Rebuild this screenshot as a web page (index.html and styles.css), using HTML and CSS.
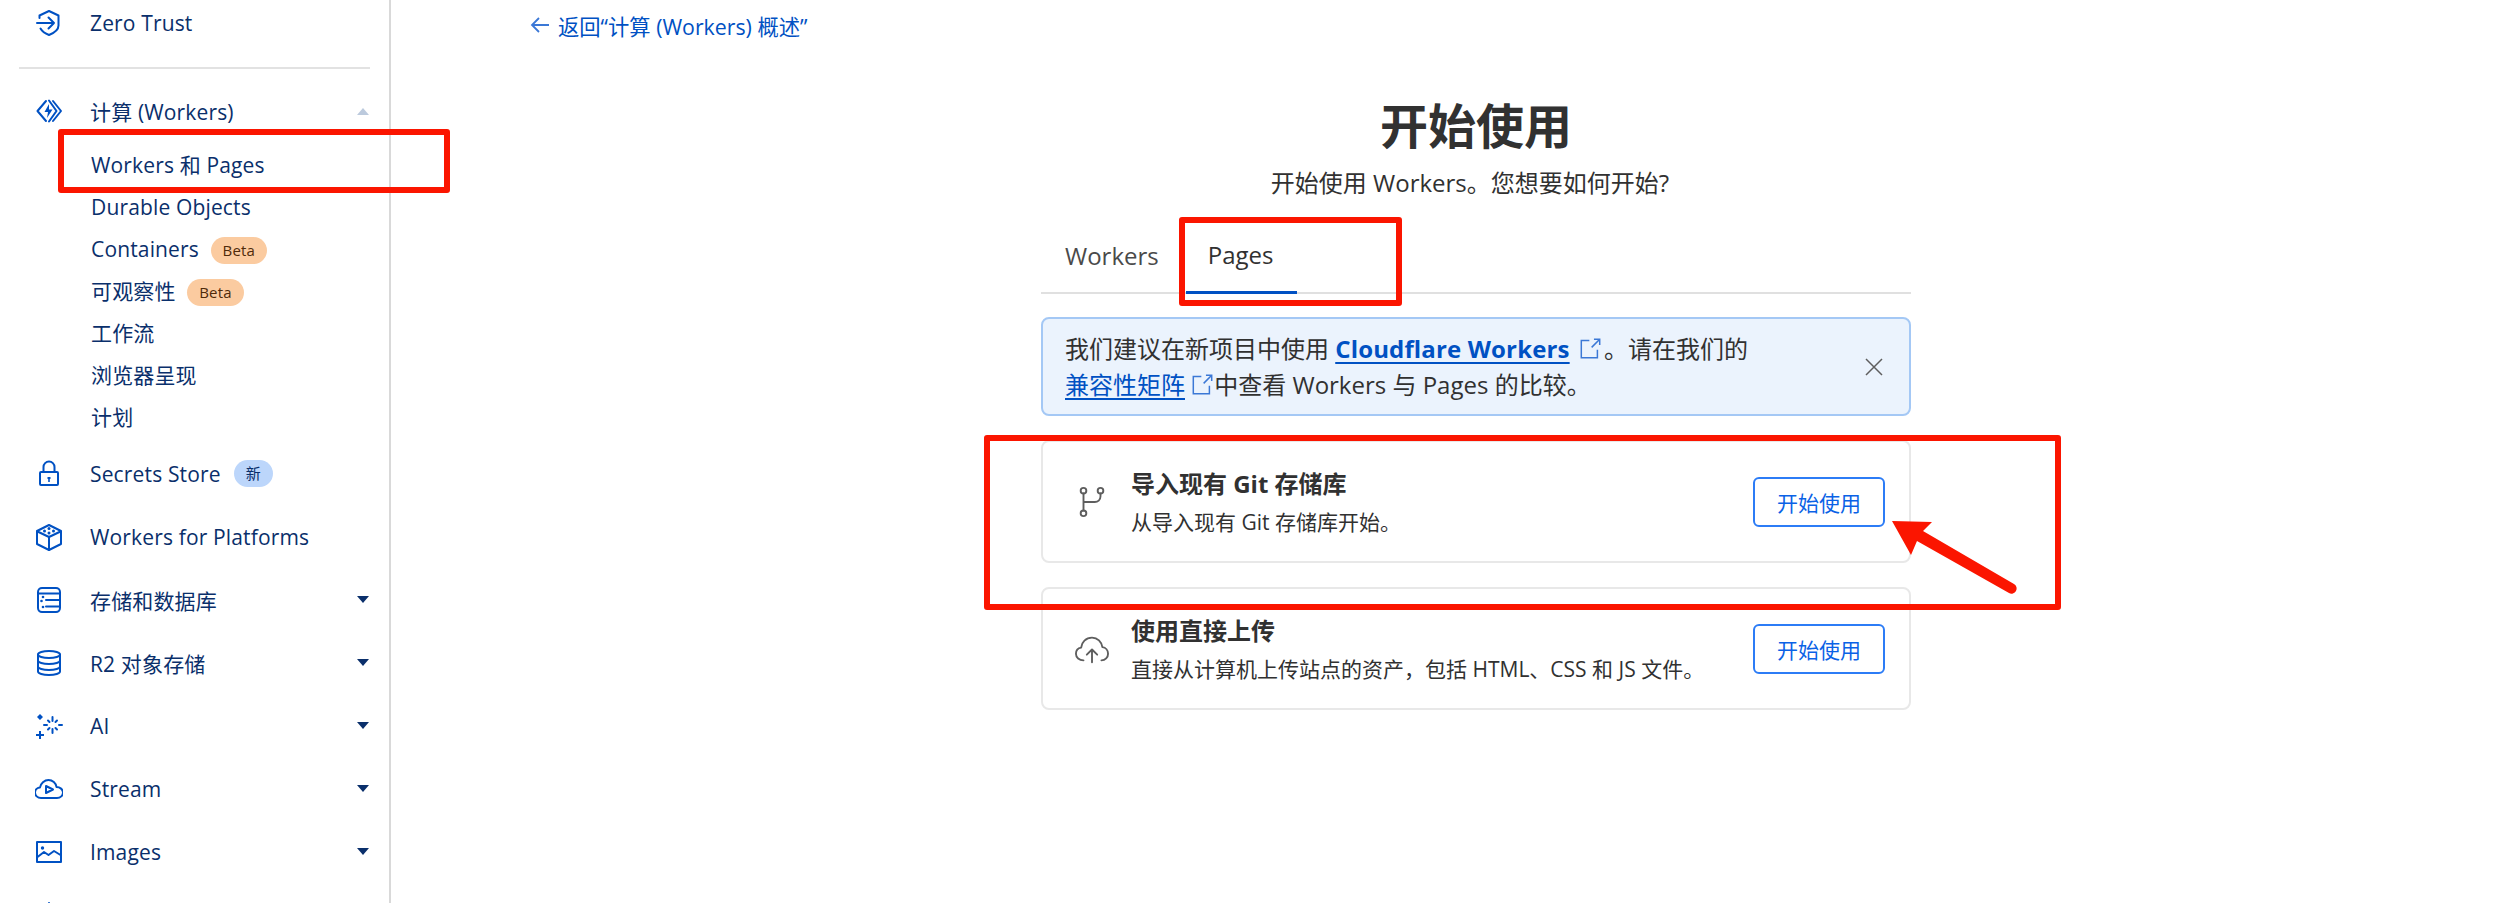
FILE: index.html
```html
<!DOCTYPE html>
<html lang="zh-CN">
<head>
<meta charset="utf-8">
<title>开始使用</title>
<link rel="stylesheet" href="styles.css">
</head>
<body>
<div class="app">
  <aside class="sidebar">
    <a class="nav-row first">
      <svg class="nav-icon" viewBox="0 0 28 28"><path d="M4.500 9V6.500L14 2l9.500 4.500v10c0 4-4.500 7.500-9.500 9.500-3.800-1.400-7-3.800-8.500-6.500"/><path d="M2 14h17M13.500 8.500 19 14l-5.500 5.500"/></svg>
      <span>Zero Trust</span>
    </a>
    <div class="divider"></div>
    <a class="nav-row compute">
      <svg class="nav-icon" viewBox="0 0 28 28"><path d="M11 4 2.500 14 11 24"/><path d="M18 4l8 10-8 10"/><path d="M14 3.500 21.500 14 14 24.500"/><path class="solid" d="M14 7 9.500 15h3.500l-1 6 5.500-8.500h-3.500z"/></svg>
      <span>计算 (Workers)</span>
      <i class="caret up"></i>
    </a>
    <ul class="sub-nav">
      <li>Workers 和 Pages</li>
      <li>Durable Objects</li>
      <li>Containers <b class="badge beta">Beta</b></li>
      <li>可观察性 <b class="badge beta">Beta</b></li>
      <li>工作流</li>
      <li>浏览器呈现</li>
      <li>计划</li>
    </ul>
    <a class="nav-row">
      <svg class="nav-icon" viewBox="0 0 28 28"><rect x="5" y="12" width="18" height="13" rx="1"/><path d="M8.500 12V7a5.500 5.500 0 0 1 11 0v5"/><path class="solid" d="M12.500 17h3v2h-.7v3h-1.600v-3h-.7z"/></svg>
      <span>Secrets Store</span><b class="badge new">新</b>
    </a>
    <a class="nav-row">
      <svg class="nav-icon" viewBox="0 0 28 28"><path d="M14 2 26 8v13l-12 6-12-6V8z"/><path d="M2.500 8.500 14 14l11.500-5.500M14 14v13"/><circle class="solid" cx="14" cy="5.500" r="1.500"/><circle class="solid" cx="9.500" cy="8" r="1.500"/><circle class="solid" cx="18.500" cy="8" r="1.500"/><circle class="solid" cx="14" cy="10" r="1.500"/></svg>
      <span>Workers for Platforms</span>
    </a>
    <a class="nav-row">
      <svg class="nav-icon" viewBox="0 0 28 28"><path d="M3 6c0-2.500 2-4 4-4h14c2 0 4 1.500 4 4v16c0 2.500-2 4-4 4H7c-2 0-4-1.500-4-4z"/><path d="M3 7.500h22M11 14h14M11 20.500h14"/><circle class="solid" cx="8" cy="11" r="1.300"/><circle class="solid" cx="6.500" cy="15" r="1.300"/><circle class="solid" cx="8" cy="21" r="1.300"/></svg>
      <span>存储和数据库</span><i class="caret"></i>
    </a>
    <a class="nav-row">
      <svg class="nav-icon" viewBox="0 0 28 28"><ellipse cx="14" cy="5.500" rx="11" ry="3.500"/><path d="M3 5.500v17c0 2 5 3.500 11 3.500s11-1.500 11-3.500v-17M3 11.500c0 2 5 3.500 11 3.500s11-1.500 11-3.500M3 17.500c0 2 5 3.500 11 3.500s11-1.500 11-3.500"/></svg>
      <span>R2 对象存储</span><i class="caret"></i>
    </a>
    <a class="nav-row">
      <svg class="nav-icon" viewBox="0 0 28 28"><path d="M17.500 5v4M17.500 17v4M24 13h3M9 13h3M22 8.500l-1.500 1.500M14.500 16 13 17.500M22 17.500 20.500 16M14.500 10 13 8.500"/><path class="solid" d="M5 2 6.500 3.500 8 5 6.500 6.500 5 8 3.500 6.500 2 5l1.500-1.500zM4 19h2v3h3v2H6v3H4v-3H1v-2h3z"/></svg>
      <span>AI</span><i class="caret"></i>
    </a>
    <a class="nav-row">
      <svg class="nav-icon" viewBox="0 0 28 28"><path d="M6 23C2.500 23 0 20.500 0 17.500c0-3 2.500-5 5-5 .5-4 4.500-7.500 8.500-7.500 4 0 7.500 3 8 7 3.500 0 6.500 2.500 6.500 5.500 0 3-2.500 5.500-6 5.500z"/><path d="M11 11l7 3.500-7 3.500z"/></svg>
      <span>Stream</span><i class="caret"></i>
    </a>
    <a class="nav-row">
      <svg class="nav-icon" viewBox="0 0 28 28"><rect x="2" y="4" width="24" height="20"/><path d="M2.500 19 9 14l4.500 3 5.500-4 6.500 4"/><circle class="solid" cx="7.500" cy="10" r="1.700"/></svg>
      <span>Images</span><i class="caret"></i>
    </a>
    <a class="nav-row">
      <svg class="nav-icon" viewBox="0 0 28 28"><path d="M14 2v24M2 14h24"/></svg>
      <span></span>
    </a>
  </aside>

  <main class="main">
    <a class="back">
      <svg viewBox="0 0 20 20"><path d="M19 10H2M9 3l-7 7 7 7"/></svg>
      <span>返回“计算 (Workers) 概述”</span>
    </a>
    <section class="panel">
      <h1>开始使用</h1>
      <p class="subtitle">开始使用 Workers。您想要如何开始?</p>
      <div class="tabs">
        <span class="tab">Workers</span>
        <span class="tab active">Pages</span>
      </div>
      <div class="banner">
        <p>我们建议在新项目中使用 <a class="strong">Cloudflare Workers</a> <svg class="ext wide" viewBox="0 0 20 20"><path d="M9 3H2v15h14v-7M11 9l7-7M13 2h5v5"/></svg>。请在我们的<br><a>兼容性矩阵</a> <svg class="ext" viewBox="0 0 20 20"><path d="M9 3H2v15h14v-7M11 9l7-7M13 2h5v5"/></svg>中查看 Workers 与 Pages 的比较。</p>
        <svg class="close" viewBox="0 0 20 20"><path d="M2 2l16 16M18 2 2 18"/></svg>
      </div>
      <div class="card">
        <svg class="card-icon" viewBox="0 0 30 36"><circle cx="6" cy="6" r="3"/><circle cx="24" cy="6" r="3"/><circle cx="6" cy="30" r="3"/><path d="M6 9v18M24 9v3c0 4-3 6-6 6H6"/></svg>
        <div class="card-text">
          <h2>导入现有 Git 存储库</h2>
          <p>从导入现有 Git 存储库开始。</p>
        </div>
        <button class="btn">开始使用</button>
      </div>
      <div class="card">
        <svg class="card-icon" viewBox="0 0 36 32"><path d="M9 28C4.500 28 1 25 1 21c0-3.500 2.500-6 5.500-6.500C7 9 11.500 4 18 4c6 0 10 4.500 11 10 3.500.5 6 3.500 6 7 0 4-3 7-7 7"/><path d="M18 30V17M12.500 22 18 16.500l5.500 5.500"/></svg>
        <div class="card-text">
          <h2>使用直接上传</h2>
          <p>直接从计算机上传站点的资产，包括 HTML、CSS 和 JS 文件。</p>
        </div>
        <button class="btn">开始使用</button>
      </div>
    </section>
  </main>
</div>

<div class="mark mark-nav"></div>
<div class="mark mark-tab"></div>
<div class="mark mark-card"></div>
<svg class="arrow" viewBox="0 0 140 80"><path d="M4 3 44 4 35 13 126 66a5 5 0 0 1-5 9L29 23 23 37z"/></svg>
</body>
</html>
```
FILE: styles.css
```css
* { box-sizing: border-box; }
html, body { margin: 0; height: 903px; overflow: hidden; background: #fff; }
body { font-family: "Open Sans", "Noto Sans CJK SC", sans-serif; position: relative; }
p, h1, h2, ul { margin: 0; padding: 0; }
ul { list-style: none; }

.app { display: flex; height: 903px; overflow: hidden; }

.sidebar {
  width: 391px;
  flex: none;
  border-right: 2px solid #d9d9d9;
  padding-left: 19px;
  color: #0a2f6b;
  font-size: 21px;
  letter-spacing: .15px;
}
.nav-row {
  display: flex;
  align-items: center;
  height: 63px;
  width: 352px;
  padding-right: 2px;
}
.nav-row.first { height: 46px; }
.nav-row.compute { height: 42px; margin-top: 21px; }
.nav-icon {
  width: 28px;
  height: 28px;
  flex: none;
  margin-left: 16px;
  margin-right: 27px;
  fill: none;
  stroke: #0051c3;
  stroke-width: 2;
  stroke-linejoin: round;
  stroke-linecap: round;
}
.nav-icon .solid { fill: #0051c3; stroke: none; }
.nav-row span { white-space: nowrap; }
.caret {
  margin-left: auto;
  width: 0;
  height: 0;
  border-left: 6.500px solid transparent;
  border-right: 6.500px solid transparent;
  border-top: 7px solid #0a2f6b;
}
.caret.up { border-top: 0; border-bottom: 7px solid #bccadd; }

.divider { width: 351px; height: 2px; background: #e2e2e2; margin-top: 21px; }

.sub-nav { padding-left: 72px; margin-bottom: 4px; padding-top: 12px; }
.sub-nav li { height: 42px; line-height: 42px; white-space: nowrap; }
.badge {
  display: inline-block;
  vertical-align: 1px;
  height: 27px;
  line-height: 27px;
  border-radius: 14px;
  padding: 0 12px;
  font-size: 15px;
  font-weight: 400;
}
.beta { background: #fbcba0; color: #4f2a0a; margin-left: 6px; }
.new { background: #bcd6fb; color: #0a2f6b; padding: 0 12px; margin-left: 13px; font-size: 15px; }

.main { flex: 1; padding-left: 139px; position: relative; }
.back {
  display: flex;
  align-items: center;
  gap: 8px;
  height: 30px;
  margin-top: 10px;
  color: #0051c3;
  font-size: 21.300px;
}
.back svg { width: 20px; height: 20px; fill: none; stroke: #3b78d6; stroke-width: 1.800; }

.panel { width: 870px; margin-left: 511px; margin-top: 54px; }
h1 {
  font-size: 48px;
  line-height: 64px;
  font-weight: 700;
  color: #313131;
  text-align: center;
}
.subtitle {
  font-size: 24px;
  line-height: 34px;
  color: #313131;
  text-align: center;
  margin-top: 8px;
  padding-right: 12px;
}
.tabs {
  display: flex;
  border-bottom: 2px solid #e0e0e0;
  height: 76px;
  margin-top: 18px;
  font-size: 24px;
  color: #4a4a4a;
}
.tab { display: flex; align-items: center; padding: 0 3px 2px 24px; height: 76px; }
.tab.active { color: #313131; padding: 0 24px 0 22px; margin-left: 24px; border-bottom: 3px solid #0051c3; }

.banner {
  margin-top: 23px;
  height: 99px;
  background: #ebf3fd;
  border: 2px solid #a4c8f5;
  border-radius: 8px;
  padding: 14px 22px;
  display: flex;
  align-items: center;
  justify-content: space-between;
  font-size: 24px;
  line-height: 36px;
  color: #313131;
}
.banner a { color: #0051c3; text-decoration: underline; text-underline-offset: 4px; }
.banner a.strong { font-weight: 700; letter-spacing: .15px; }
.ext { width: 23px; height: 23px; vertical-align: -2px; fill: none; stroke: #3b78d6; stroke-width: 1.300; }
.ext.wide { margin-left: 3px; margin-right: 2px; }
.close { width: 20px; height: 20px; flex: none; margin-right: 3px; fill: none; stroke: #5e5e5e; stroke-width: 1.500; }

.card {
  display: flex;
  align-items: center;
  height: 123px;
  margin-top: 24px;
  border: 2px solid #e8e8e8;
  border-radius: 8px;
  padding: 0 24px 0 32px;
  color: #313131;
}
.card-icon { width: 34px; height: 34px; flex: none; fill: none; stroke: #5e5e5e; stroke-width: 2; stroke-linecap: round; stroke-linejoin: round; }
.card-text { flex: 1; margin-left: 22px; }
.card h2 { font-size: 24px; line-height: 34px; font-weight: 700; }
.card p { font-size: 21px; line-height: 30px; margin-top: 6px; }
.btn {
  width: 132px;
  height: 50px;
  background: #fff;
  border: 2px solid #2c7cf6;
  border-radius: 6px;
  color: #0a62e6;
  font: 21px "Open Sans", "Noto Sans CJK SC", sans-serif;
}

.mark { position: absolute; border: 6px solid #fb1500; border-radius: 3px; }
.mark-nav { left: 58px; top: 129px; width: 392px; height: 64px; }
.mark-tab { left: 1179px; top: 217px; width: 223px; height: 89px; }
.mark-card { left: 984px; top: 435px; width: 1077px; height: 175px; }
.arrow { position: absolute; left: 1888px; top: 518px; width: 140px; height: 80px; }
.arrow path { fill: #fb1500; }
```
